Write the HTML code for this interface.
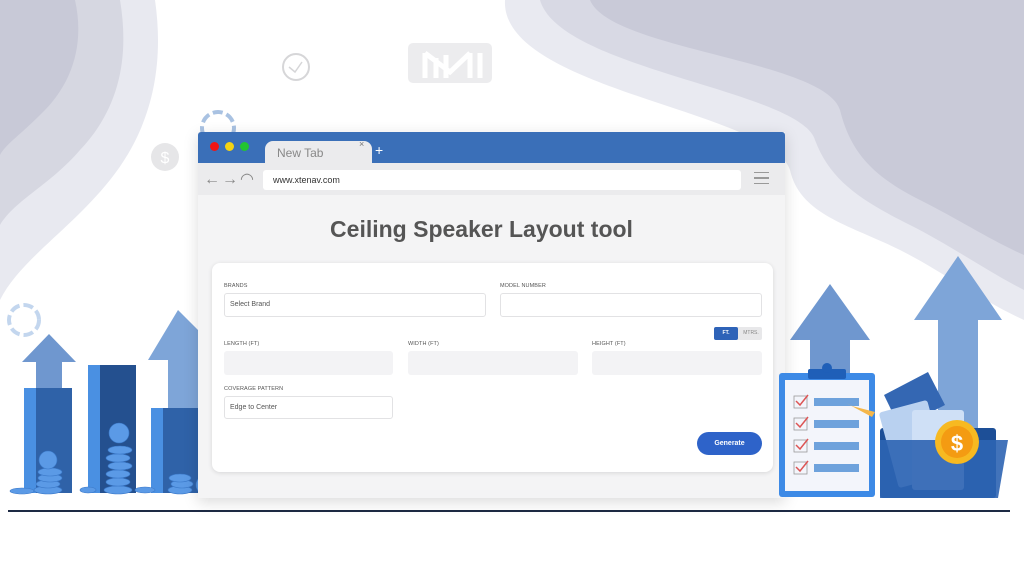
<!DOCTYPE html>
<html><head><meta charset="utf-8"><style>
*{margin:0;padding:0;box-sizing:border-box}
body{width:1024px;height:576px;overflow:hidden;background:#fff;font-family:"Liberation Sans",sans-serif;position:relative}
.abs{position:absolute}
.lbl{position:absolute;font-size:5.5px;color:#555;letter-spacing:.1px}
.in{position:absolute;border-radius:3px}
</style></head><body>
<svg class="abs" style="left:0;top:0" width="1024" height="576">
 <!-- left top blob -->
 <path d="M0 0 H155 C165 70 150 130 110 180 C70 230 20 260 0 300 Z" fill="#e8e9f0"/>
 <path d="M0 0 H120 C130 60 118 110 80 150 C50 185 15 200 0 225 Z" fill="#d6d7e1"/>
 <path d="M0 0 H75 C85 45 72 85 40 115 C20 135 5 145 0 155 Z" fill="#c8c9d7"/>
 <!-- right blob -->
 <path d="M505 0 H1024 V320 C980 300 940 270 900 250 C850 225 800 215 790 170 C770 110 500 90 505 0 Z" fill="#e9eaf1"/>
 <path d="M540 0 H1024 V290 C985 270 950 245 910 225 C860 200 830 180 815 140 C800 90 560 70 540 0 Z" fill="#d8d9e4"/>
 <path d="M590 0 H1024 V255 C990 240 960 220 920 200 C870 175 850 150 840 110 C825 60 610 50 590 0 Z" fill="#c9cad8"/>
 <!-- faint icons -->
 <circle cx="296" cy="67" r="13" fill="none" stroke="#d6d6d8" stroke-width="2"/>
 <path d="M289 67 L295 72 L302 62" fill="none" stroke="#d6d6d8" stroke-width="1.5"/>
 <rect x="408" y="43" width="84" height="40" rx="5" fill="#ececee"/>
 <path d="M425 78 V53 M436 78 V58 M446 78 V55 M470 78 V53 M480 78 V53 M425 53 L450 72 L470 53" stroke="#fff" stroke-width="5" fill="none"/>
 <circle cx="165" cy="157" r="14" fill="#e6e6e8"/>
 <text x="165" y="163" font-size="16" fill="#fff" text-anchor="middle" font-family="Liberation Sans">$</text>
 <circle cx="218" cy="128" r="16" fill="none" stroke="#a9c2e2" stroke-width="4" stroke-dasharray="10 4"/>
 <circle cx="24" cy="320" r="15" fill="none" stroke="#c3d6ee" stroke-width="4" stroke-dasharray="10 4"/>
 <!-- left bars -->
 <path d="M22 362 L49 334 L76 362 L62 362 L62 390 L36 390 L36 362 Z" fill="#6f97cf"/>
 <rect x="24" y="388" width="12" height="105" fill="#4a90e2"/><rect x="36" y="388" width="36" height="105" fill="#2f62a8"/>
 <rect x="88" y="365" width="12" height="128" fill="#4a90e2"/><rect x="100" y="365" width="36" height="128" fill="#24508f"/>
 <path d="M148 360 L178 310 L198 330 L198 410 L168 410 L168 360 Z" fill="#7ea5d8"/>
 <rect x="151" y="408" width="12" height="85" fill="#4a90e2"/><rect x="163" y="408" width="37" height="85" fill="#2f62a8"/>
 <g fill="#5b9ae6" stroke="#3a78c8" stroke-width=".6">
  <ellipse cx="48" cy="490" rx="14" ry="4"/><ellipse cx="48" cy="484" rx="12" ry="4"/><ellipse cx="50" cy="478" rx="12" ry="4"/><ellipse cx="50" cy="472" rx="12" ry="4"/>
  <ellipse cx="118" cy="490" rx="14" ry="4"/><ellipse cx="118" cy="482" rx="12" ry="4"/><ellipse cx="118" cy="474" rx="12" ry="4"/><ellipse cx="120" cy="466" rx="12" ry="4"/><ellipse cx="118" cy="458" rx="12" ry="4"/><ellipse cx="120" cy="450" rx="12" ry="4"/>
  <ellipse cx="180" cy="490" rx="12" ry="4"/><ellipse cx="182" cy="484" rx="11" ry="4"/><ellipse cx="180" cy="478" rx="11" ry="4"/>
  <ellipse cx="22" cy="491" rx="12" ry="3"/><ellipse cx="88" cy="490" rx="8" ry="3"/><ellipse cx="145" cy="490" rx="10" ry="3"/>
  <circle cx="48" cy="460" r="9"/><circle cx="119" cy="433" r="10"/><circle cx="206" cy="485" r="10"/>
 </g>
 <!-- arrows right (behind) -->
 <path d="M790 340 L830 284 L870 340 L850 340 L850 380 L810 380 L810 340 Z" fill="#6f97cf"/>
 <path d="M914 320 L958 256 L1002 320 L978 320 L978 440 L938 440 L938 320 Z" fill="#7ea5d8"/>
 <rect x="8" y="510" width="1002" height="2" fill="#1d2a44"/>
</svg>

<!-- browser -->
<div class="abs" style="left:198px;top:132px;width:587px;height:366px;background:#f4f4f5;box-shadow:0 4px 14px rgba(0,0,0,.15)">
 <div class="abs" style="left:0;top:0;width:587px;height:31px;background:#3a6fb8;border-radius:3px 3px 0 0"></div>
 <div class="abs" style="left:12px;top:10px;width:9px;height:9px;border-radius:50%;background:#f01414"></div>
 <div class="abs" style="left:27px;top:10px;width:9px;height:9px;border-radius:50%;background:#f4d313"></div>
 <div class="abs" style="left:42px;top:10px;width:9px;height:9px;border-radius:50%;background:#22c431"></div>
 <div class="abs" style="left:67px;top:9px;width:107px;height:24px;background:#ebebed;border-radius:8px 8px 0 0"></div>
 <div class="abs" style="left:79px;top:14px;font-size:12px;color:#888">New Tab</div>
 <div class="abs" style="left:161px;top:7px;font-size:9px;color:#777">×</div>
 <div class="abs" style="left:177px;top:10px;font-size:14px;color:#fff">+</div>
 <div class="abs" style="left:0;top:31px;width:587px;height:32px;background:#ebebed"></div>
 <div class="abs" style="left:6px;top:37px;font-size:16px;color:#888;letter-spacing:2px">←→◠</div>
 <div class="abs" style="left:65px;top:38px;width:478px;height:20px;background:#fff;border-radius:3px"></div>
 <div class="abs" style="left:75px;top:43px;font-size:9px;color:#333">www.xtenav.com</div>
 <div class="abs" style="left:556px;top:40px;width:15px;height:12px;border-top:1.5px solid #999;border-bottom:1.5px solid #999"><div style="margin-top:4px;height:1.5px;background:#999"></div></div>
 <div class="abs" style="left:0;top:84px;width:567px;text-align:center;font-size:23px;font-weight:bold;color:#555;padding-left:0">Ceiling Speaker Layout tool</div>
 <div class="abs" style="left:14px;top:131px;width:561px;height:209px;background:#fff;border-radius:8px;box-shadow:0 1px 5px rgba(0,0,0,.12)"></div>
</div>
<div class="lbl" style="left:224px;top:283px">BRANDS</div>
<div class="lbl" style="left:500px;top:283px">MODEL NUMBER</div>
<div class="in" style="left:224px;top:293px;width:262px;height:24px;border:1px solid #e2e2e4"></div>
<div class="abs" style="left:230px;top:301px;font-size:7px;color:#555">Select Brand</div>
<div class="in" style="left:500px;top:293px;width:262px;height:24px;border:1px solid #e2e2e4"></div>
<div class="abs" style="left:714px;top:327px;width:48px;height:13px;background:#e8e8ea;border-radius:2px"></div>
<div class="abs" style="left:714px;top:327px;width:24px;height:13px;background:#2e63b8;border-radius:2px;color:#fff;font-size:5px;text-align:center;line-height:13px;font-weight:bold">FT.</div>
<div class="abs" style="left:740px;top:327px;width:22px;font-size:5px;color:#888;line-height:13px;text-align:center">MTRS.</div>
<div class="lbl" style="left:224px;top:341px">LENGTH (FT)</div>
<div class="lbl" style="left:408px;top:341px">WIDTH (FT)</div>
<div class="lbl" style="left:592px;top:341px">HEIGHT (FT)</div>
<div class="in" style="left:224px;top:351px;width:169px;height:24px;background:#f3f3f5"></div>
<div class="in" style="left:408px;top:351px;width:170px;height:24px;background:#f3f3f5"></div>
<div class="in" style="left:592px;top:351px;width:170px;height:24px;background:#f3f3f5"></div>
<div class="lbl" style="left:224px;top:386px">COVERAGE PATTERN</div>
<div class="in" style="left:224px;top:396px;width:169px;height:23px;border:1px solid #e2e2e4"></div>
<div class="abs" style="left:230px;top:404px;font-size:7px;color:#555">Edge to Center</div>
<div class="abs" style="left:697px;top:432px;width:65px;height:23px;background:#2e63c9;border-radius:12px;color:#fff;font-size:7px;font-weight:bold;text-align:center;line-height:23px">Generate</div>

<!-- right illustration (front) -->
<svg class="abs" style="left:0;top:0" width="1024" height="576">
 <rect x="779" y="373" width="96" height="124" rx="3" fill="#3d8ae6"/>
 <rect x="785" y="380" width="84" height="111" fill="#f3f5fb"/>
 <rect x="808" y="369" width="38" height="10" rx="2" fill="#1f5fb8"/><circle cx="827" cy="368" r="5" fill="#1f5fb8"/>
 <g fill="none" stroke="#d55" stroke-width="1.5">
  <rect x="794" y="396" width="13" height="12" stroke="#999" stroke-width=".8"/><path d="M796 401 L800 405 L808 395"/>
  <rect x="794" y="418" width="13" height="12" stroke="#999" stroke-width=".8"/><path d="M796 423 L800 427 L808 417"/>
  <rect x="794" y="440" width="13" height="12" stroke="#999" stroke-width=".8"/><path d="M796 445 L800 449 L808 439"/>
  <rect x="794" y="462" width="13" height="12" stroke="#999" stroke-width=".8"/><path d="M796 467 L800 471 L808 461"/>
 </g>
 <g fill="#6ea2dc"><rect x="814" y="398" width="45" height="8"/><rect x="814" y="420" width="45" height="8"/><rect x="814" y="442" width="45" height="8"/><rect x="814" y="464" width="45" height="8"/></g>
 <path d="M846 403 L852 406 L875 412 L872 417 Z" fill="#f5b74a"/>
 <rect x="880" y="428" width="116" height="70" rx="3" fill="#1d4f97"/>
 <path d="M884 395 L928 372 L945 405 L900 428 Z" fill="#3467b3"/>
 <rect x="888" y="405" width="50" height="78" rx="3" fill="#b9d1f0" transform="rotate(-15 913 444)"/>
 <rect x="912" y="410" width="52" height="80" rx="3" fill="#cfe0f6"/>
 <path d="M880 440 H1008 L998 498 H880 Z" fill="#2e64b3" opacity=".9"/>
 <circle cx="957" cy="442" r="22" fill="#f7b921"/><circle cx="957" cy="442" r="16" fill="#f49b12"/>
 <text x="957" y="451" font-size="22" font-weight="bold" fill="#fff" text-anchor="middle" font-family="Liberation Sans">$</text>
</svg>
</body></html>
